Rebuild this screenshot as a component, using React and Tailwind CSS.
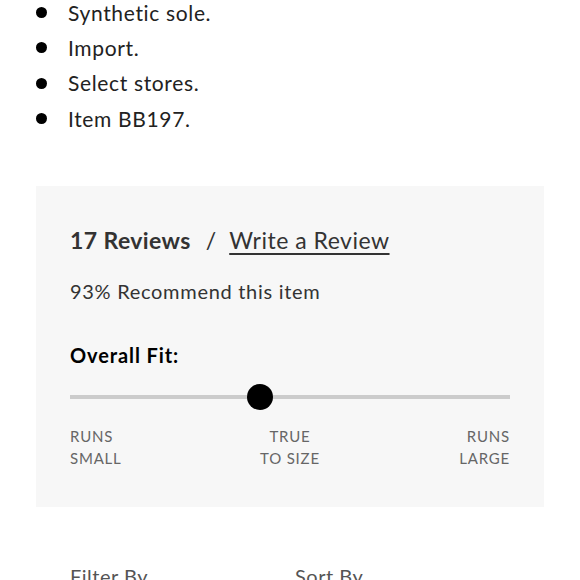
export default function App() {
  const items = ["Synthetic sole.", "Import.", "Select stores.", "Item BB197."];
  return (
    <div className="w-[580px] h-[580px] overflow-hidden bg-white text-[#222]" style={{ fontFamily: "Lato, 'Noto Sans', sans-serif" }}>
      <ul className="pl-[36px] pt-0 -mt-[5px]">
        {items.map((t) => (
          <li key={t} className="flex items-center h-[35.3px]">
            <span className="w-[11px] h-[11px] rounded-full bg-black mr-[21px]" />
            <span className="text-[21px] tracking-[0.65px]">{t}</span>
          </li>
        ))}
      </ul>
      <div className="mx-[36px] mt-[50px] bg-[#f7f7f7] h-[321px] px-[34px] pt-[37px]">
        <div className="flex items-center text-[23px] text-[#333]">
          <span className="font-bold tracking-[0.4px]">17 Reviews</span>
          <span className="ml-[15px] mr-[13px]">/</span>
          <span className="underline underline-offset-[4px] decoration-[1.5px] tracking-[0.5px]">Write a Review</span>
        </div>
        <div className="mt-[18px] text-[20px] tracking-[0.7px] text-[#333]">93% Recommend this item</div>
        <div className="mt-[34px] text-[20px] font-bold tracking-[0.9px] text-black">Overall Fit:</div>
        <div className="relative mt-[14px] h-[26px] flex items-center">
          <div className="w-full h-[4px] bg-[#cccccc]" />
          <div className="absolute left-[177px] top-0 w-[26px] h-[26px] rounded-full bg-black" />
        </div>
        <div className="mt-[15px] grid grid-cols-3 text-[15px] leading-[22px] tracking-[0.8px] text-[#666]">
          <div>RUNS<br />SMALL</div>
          <div className="text-center">TRUE<br />TO SIZE</div>
          <div className="text-right">RUNS<br />LARGE</div>
        </div>
      </div>
      <div className="flex px-[70px] mt-[54px] text-[20px] tracking-[0.5px] text-[#555]">
        <div className="w-[225px]">Filter By</div>
        <div>Sort By</div>
      </div>
    </div>
  );
}
